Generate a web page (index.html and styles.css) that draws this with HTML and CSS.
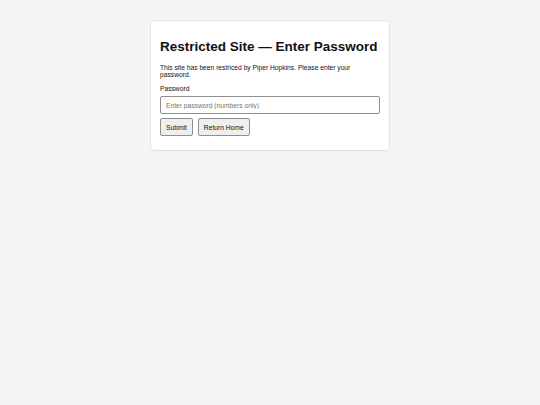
FILE: index.html
```html
<!DOCTYPE html>
<html lang="en">
<head>
    <meta charset="UTF-8">
    <meta name="viewport" content="width=device-width, initial-scale=1.0">
    <title>Restricted Site</title>
    <link rel="stylesheet" href="styles.css">
</head>
<body>
    <div class="card">
        <h1>Restricted Site — Enter Password</h1>
        <p class="intro">This site has been restriced by Piper Hopkins. Please enter your password.</p>
        <label for="password">Password</label>
        <input type="password" id="password" placeholder="Enter password (numbers only)">
        <div class="actions">
            <button class="button">Submit</button>
            <button class="button">Return Home</button>
        </div>
    </div>
</body>
</html>
```

FILE: styles.css
```css
body {
    font-family: 'Liberation Sans', Arial, sans-serif;
    background-color: #f4f4f6;
    margin: 0;
    padding: 20px 0;
    color: #111;
    font-size: 6.7px;
}
.card {
    width: 240px;
    box-sizing: border-box;
    margin: 0 auto;
    background-color: #fff;
    border: 1px solid #e2e2e6;
    border-radius: 4px;
    padding: 10px 9px 14px;
}
h1 {
    font-size: 13.5px;
    margin: 8px 0 10px;
}
.intro {
    margin: 0 0 7px;
    line-height: 7px;
}
label {
    display: block;
    margin-bottom: 4px;
}
input {
    display: block;
    width: 100%;
    box-sizing: border-box;
    height: 18px;
    padding: 0 5px;
    border: 1px solid #8f8f8f;
    border-radius: 2px;
    font-family: inherit;
    font-size: 6.7px;
    margin-bottom: 4px;
}
input::placeholder {
    color: #757575;
}
.actions {
    display: flex;
    gap: 5px;
}
.button {
    height: 18px;
    padding: 0 5px;
    font-family: inherit;
    font-size: 6.7px;
    color: #111;
    background-color: #efefef;
    border: 1px solid #8f8f8f;
    border-radius: 2px;
}
```
